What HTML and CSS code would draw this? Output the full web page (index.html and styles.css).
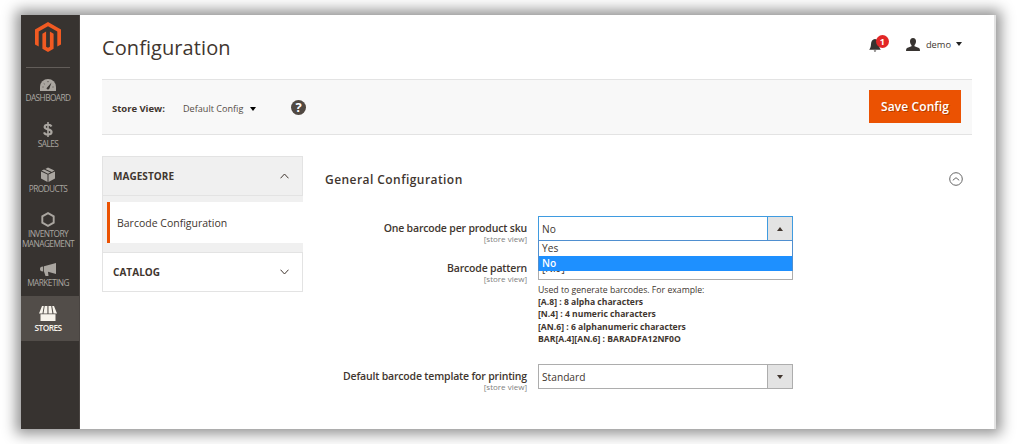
FILE: index.html
```
<!DOCTYPE html>
<html lang="en">
<head>
<meta charset="utf-8">
<title>Configuration</title>
<link rel="stylesheet" href="styles.css">
</head>
<body>
<div class="window">
  <nav class="sidebar">
    <div class="brand">
      <svg width="26" height="30" viewBox="0 0 26 30" fill="#f15a22"><path d="M13 0 26 7.5V22.5L22.3 24.6V9.6L13 4.3 3.7 9.6V24.600L0 22.500V7.500Z"/><path d="M7.400 11.700 11.100 9.600V24.700L13 25.800 14.900 24.700V9.600L18.600 11.700V26.800L13 30 7.400 26.800Z"/></svg>
    </div>
    <a class="item"><span class="icon"><svg width="16" height="12" viewBox="0 0 16 12"><path d="M0 12V8a8 8 0 0 1 16 0v4Z" fill="#aaa6a0"/><path d="M2.500 8h1M3.800 4.500l.8.6M8 2v1.200M13.500 8h-1" stroke="#373330" stroke-width=".8"/><path d="M6.500 9.300 11.500 3.500 9.300 9.800a1.500 1.500 0 0 1-2.800-.5Z" fill="#373330"/></svg></span><span>DASHBOARD</span></a>
    <a class="item"><span class="icon"><svg width="10" height="15" viewBox="0 0 10 15" fill="none" stroke="#aaa6a0" stroke-width="2.100"><path d="M8.500 4.500C8 3.200 6.700 2.700 5 2.700 3 2.700 1.600 3.500 1.600 5c0 3.200 7 1.500 7 5 0 1.600-1.600 2.500-3.600 2.500-2 0-3.500-.8-4-2.200"/><path d="M5 0v15" stroke-width="1.600"/></svg></span><span>SALES</span></a>
    <a class="item"><span class="icon"><svg width="14" height="15" viewBox="0 0 14 15" fill="#aaa6a0"><path d="M0 4.600 6.500 7.600V15L0 11.600ZM14 4.600 7.500 7.600V15L14 11.600ZM.6 3.600 3 2.500 9.500 5.600 7 6.700ZM4.300 1.900 7 .6 13.400 3.600 10.800 4.900Z"/></svg></span><span>PRODUCTS</span></a>
    <a class="item tall"><span class="icon"><svg width="14" height="15" viewBox="0 0 14 15" fill="none" stroke="#aaa6a0" stroke-width="1.900"><path d="M7 1.200 12.700 4.400v6.200L7 13.800 1.300 10.600V4.400Z"/></svg></span><span>INVENTORY<br>MANAGEMENT</span></a>
    <a class="item"><span class="icon"><svg width="17" height="13" viewBox="0 0 17 13" fill="#aaa6a0"><path d="M4 3.200 16 0v11L8 8.700 8.500 13H5.500L4 8.500ZM3.200 3.600v4.800C.5 8.400 0 7.400 0 6s.5-2.400 3.200-2.400Z"/></svg></span><span>MARKETING</span></a>
    <a class="item active"><span class="icon"><svg width="18" height="15" viewBox="0 0 18 15" fill="#f7f3eb"><path d="M3 0h1.800L3.500 7.500H0ZM5.700 0h2.700v7.500H4.500ZM9.500 0h2.700l1.200 7.500H9.500ZM13.200 0H15l3 7.500h-3.500ZM1.500 8.300h15V15h-15Z"/></svg></span><span>STORES</span></a>
  </nav>
  <main class="page">
    <header class="header">
      <h1>Configuration</h1>
      <div class="tools">
        <span class="bell"><svg width="12" height="13" viewBox="0 0 12 13" fill="#373330"><path d="M6 0C3.500.5 2.200 2 2 5 1.800 8 1.500 9 .2 10.700h11.600C10.500 9 10.200 8 10 5 9.800 2 8.500.5 6 0ZM4.600 11.500h2.800L6 13Z"/></svg><b class="badge">1</b></span>
        <span class="user"><svg width="14" height="13" viewBox="0 0 14 13" fill="#373330"><path d="M7 0c2 0 3 1.300 3 3.200C10 5 9.300 6.400 8.500 7v1.200L13 10q1 .6 1 3H0q0-2.400 1-3L5.500 8.200V7C4.700 6.400 4 5 4 3.200 4 1.300 5 0 7 0Z"/></svg><span>demo</span><svg width="6" height="4" viewBox="0 0 6 4"><path d="M0 0h6L3 4Z" fill="#222"/></svg></span>
      </div>
    </header>
    <section class="toolbar">
      <b class="view-label">Store View:</b>
      <span class="view-value">Default Config</span>
      <svg class="caret" width="6" height="4" viewBox="0 0 6 4"><path d="M0 0h6L3 4Z"/></svg>
      <span class="help">?</span>
      <button class="save">Save Config</button>
    </section>
    <div class="body">
      <aside class="tabs">
        <div class="tab open"><b>MAGESTORE</b><svg width="9" height="6" viewBox="0 0 9 6"><path d="M.5 5.300 4.500 1l4 4.300"/></svg></div>
        <div class="sub"><div class="current">Barcode Configuration</div></div>
        <div class="tab closed"><b>CATALOG</b><svg width="9" height="6" viewBox="0 0 9 6"><path d="M.5.700 4.500 5l4-4.300"/></svg></div>
      </aside>
      <section class="settings">
        <div class="section-head"><h2>General Configuration</h2><svg width="14" height="14" viewBox="0 0 14 14" fill="none" stroke="#666"><circle cx="7" cy="7" r="6.300"/><path d="M3.800 8.300 7 5.700l3.200 2.600"/></svg></div>
        <div class="row first">
          <div class="label"><b>One barcode per product sku</b><small>[store view]</small></div>
          <div class="field">
            <div class="select focus"><span>No</span><i class="arrow"><svg width="6" height="4" viewBox="0 0 6 4"><path d="M0 4h6L3 0Z"/></svg></i></div>
            <div class="options"><div>Yes</div><div class="chosen">No</div></div>
          </div>
        </div>
        <div class="row second">
          <div class="label"><b>Barcode pattern</b><small>[store view]</small></div>
          <div class="field">
            <div class="input">[N.9]</div>
            <div class="note"><span>Used to generate barcodes. For example:</span><b>[A.8] : 8 alpha characters</b><b>[N.4] : 4 numeric characters</b><b>[AN.6] : 6 alphanumeric characters</b><b>BAR[A.4][AN.6] : BARADFA12NF0O</b></div>
          </div>
        </div>
        <div class="row third">
          <div class="label"><b>Default barcode template for printing</b><small>[store view]</small></div>
          <div class="field"><div class="select"><span>Standard</span><i class="arrow"><svg width="6" height="4" viewBox="0 0 6 4"><path d="M0 0h6L3 4Z"/></svg></i></div></div>
        </div>
      </section>
    </div>
  </main>
</div>
</body>
</html>
```
FILE: styles.css
```
* { box-sizing: border-box; }
body { margin: 0; width: 1017px; height: 444px; padding: 15px 21px; overflow: hidden; background: #fff; font-family: "Open Sans", sans-serif; font-size: 10px; color: #41362f; }
svg { display: block; flex: none; }
b { font-weight: 600; }
i { font-style: normal; }
.window { display: flex; width: 975px; height: 414px; background: #fff; box-shadow: 0 0 13px 5px rgba(0,0,0,.43); }
.sidebar { flex: none; width: 59px; background: #373330; border-right: 1px solid #4a4542; }
.brand { height: 53px; margin: 0 9px 0 5px; padding: 7px 0 0 9px; border-bottom: 1px solid #625d59; }
.item { display: flex; flex-direction: column; align-items: center; width: 58px; height: 45px; padding-right: 4px; font-size: 8.3px; line-height: 10px; letter-spacing: -.55px; text-align: center; color: #aaa6a0; white-space: nowrap; }
.brand + .item { height: 44px; }
.icon { display: flex; align-items: flex-end; justify-content: center; height: 25px; margin-bottom: 2px; }
.brand + .item .icon { height: 23px; }
.item.tall { height: 49px; }
.item.active { background: #524d49; color: #f7f3eb; font-weight: 600; }
.page { flex: 1; padding: 0 22px; border-right: 2px solid #e3e3e3; }
.header { display: flex; justify-content: space-between; height: 64px; padding: 0 10px 0 0; }
h1 { margin: 18px 0 0; font-size: 20px; line-height: 30px; font-weight: 400; letter-spacing: .08px; }
.tools { display: flex; gap: 24px; height: 58px; align-items: center; }
.bell { position: relative; width: 13px; padding-top: 2px; }
.badge { position: absolute; left: 7px; top: -2px; width: 13px; height: 13px; border-radius: 50%; background: #e22626; color: #fff; font-size: 9px; font-weight: 700; line-height: 13px; text-align: center; }
.user { display: flex; align-items: center; gap: 6px; font-size: 9.3px; }
.user span { margin-right: -1px; }
.toolbar { display: flex; align-items: center; height: 56px; padding: 0 11px 0 10px; background: #f8f8f8; border: solid #e3e3e3; border-width: 1px 0; }
.view-label { width: 53px; font-size: 9.5px; font-weight: 700; white-space: nowrap; padding-top: 2px; letter-spacing: -.03px; }
.view-value { width: 60px; margin-left: 18px; padding-top: 2px; font-size: 9.1px; white-space: nowrap; color: #554c46; }
.caret { margin: 4px 0 0 7px; }
.help { width: 15px; height: 15px; margin-left: 35px; border-radius: 50%; background: #514943; color: #fff; font-size: 13px; font-weight: 700; line-height: 15px; text-align: center; }
.save { width: 92px; height: 33px; margin: -2px 0 0 auto; padding: 0; border: 0; background: #eb5202; color: #fff; font: 600 12px/33px "Open Sans", sans-serif; letter-spacing: .1px; text-shadow: 1px 1px 0 rgba(0,0,0,.25); }
.body { display: flex; padding-top: 21px; }
.tabs { flex: none; width: 201px; height: 136px; border-left: 1px solid #e3e3e3; }
.tab { display: flex; align-items: center; justify-content: space-between; padding: 0 13px 0 10px; border-right: 1px solid #e3e3e3; }
.tab b { font-weight: 700; letter-spacing: .05px; }
.tab svg { fill: none; stroke: #41362f; }
.open { height: 40px; background: #f0f0f0; border-top: 1px solid #e3e3e3; border-bottom: 1px solid #e3e3e3; }
.sub { height: 57px; padding: 6px 0 9px 4px; background: #f0f0f0; border-bottom: 1px solid #e3e3e3; }
.current { height: 41px; padding-left: 7px; background: #fff; border-left: 3px solid #eb5202; line-height: 43px; font-size: 10.5px; }
.closed { height: 39px; border-bottom: 1px solid #e3e3e3; }
.settings { flex: 1; padding-left: 22px; }
.section-head { display: flex; align-items: center; justify-content: space-between; height: 46px; padding-right: 9px; }
h2 { margin: 0; font-size: 12px; font-weight: 600; letter-spacing: .44px; }
.row { display: flex; gap: 11px; }
.first { height: 39px; margin-top: 14px; }
.second { height: 109px; }
.label { width: 202px; padding-top: 5px; text-align: right; white-space: nowrap; }
.second .label { padding-top: 6px; }
.label b { display: block; font-size: 10.5px; line-height: 14px; letter-spacing: -.18px; }
.label small { display: block; font-size: 8px; line-height: 8px; color: #808080; }
.field { position: relative; width: 255px; font-size: 10.2px; }
.select { display: flex; height: 25px; border: 1px solid #adadad; line-height: 25px; }
.select > span, .input { padding-left: 3px; }
.arrow { display: flex; align-items: center; justify-content: center; width: 25px; height: 23px; margin-left: auto; border-left: 1px solid #adadad; background: #e3e3e3; }
.arrow svg { fill: #41362f; }
.focus, .focus .arrow { border-color: #3f9be0; }
.options { position: absolute; z-index: 2; top: 24px; left: 0; width: 255px; height: 31px; border: 1px solid #4f8fd0; border-bottom: 0; background: #fff; line-height: 15px; }
.options div { height: 15px; padding-left: 3px; }
.options .chosen { background: #1e90ff; color: #fff; font-weight: 600; }
.input { height: 25px; border: 1px solid #adadad; line-height: 25px; }
.note { display: flex; flex-direction: column; align-items: flex-start; margin-top: 4px; font-size: 8.7px; line-height: 12.2px; white-space: nowrap; }
.note b { font-weight: 700; font-size: 8.6px; }
```
